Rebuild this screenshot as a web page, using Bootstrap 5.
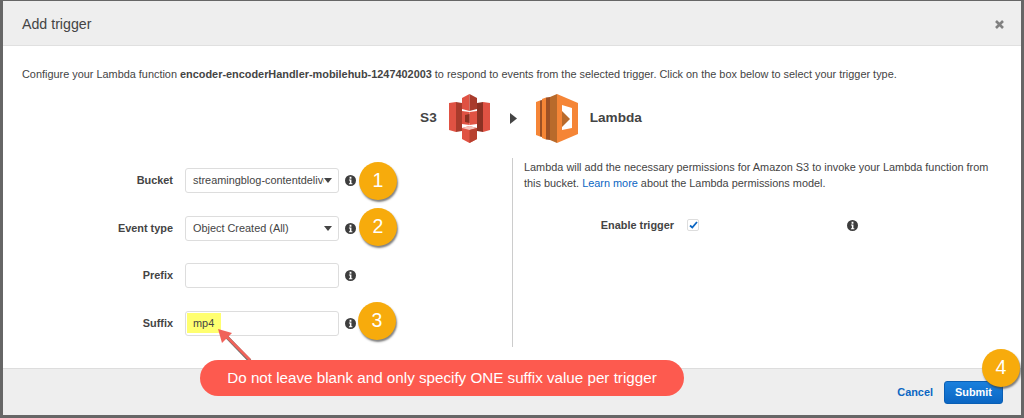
<!DOCTYPE html>
<html lang="en">
<head>
    <meta charset="UTF-8">
    <meta name="viewport" content="width=device-width, initial-scale=1.0">
    <title>Add trigger</title>
    <link href="https://cdn.jsdelivr.net/npm/bootstrap@5.3.0/dist/css/bootstrap.min.css" rel="stylesheet">
    <style>
        html, body { height: 418px; overflow: hidden; }
        body { background: #666; font-family: "Liberation Sans", Arial, sans-serif; font-size: 10.9px; color: #444; padding: 1px 3px 3px; }
        .shot-modal { position: relative; height: 414px; background: #fff; display: flex; flex-direction: column; }
        .shot-head { height: 45px; background: #eee; border-bottom: 1px solid #e0e0e0; padding: 3px 17px 0 19px; }
        .shot-head h5 { font-size: 14.2px; font-weight: 400; color: #444; margin: 0; }
        .shot-body { flex: 1; padding: 21px 19px 0; }
        .shot-intro { margin: 0; line-height: 15px; height: 27px; white-space: nowrap; }
        .shot-flow { height: 49px; padding-left: 38px; }
        .shot-flow b { font-size: 13.6px; color: #444; }
        .shot-cols { height: 189px; margin-top: 15px; }
        .shot-left { width: 490px; padding-top: 10px; }
        .shot-right { flex: 1; border-left: 1px solid #ccc; padding: 2px 0 0 11px; }
        .shot-row { height: 47.5px; display: flex; align-items: flex-start; }
        .shot-label { width: 151px; text-align: right; font-weight: 700; line-height: 25px; }
        .shot-input { width: 154px; height: 25px; margin-left: 12px; border: 1px solid #ddd; border-radius: 3px; background: #fff; padding: 0 6px 0 4px; display: flex; align-items: center; white-space: nowrap; overflow: hidden; }
        .shot-input span { overflow: hidden; padding-left: 3px; }
        .shot-caret { flex: none; width: 0; height: 0; border-left: 4.5px solid transparent; border-right: 4.5px solid transparent; border-top: 5px solid #444; margin-left: auto; }
        .shot-input .shot-hl { background: #ffff70; height: 20px; line-height: 20px; padding: 0 7px 0 6px; margin-left: -3px; }
        .shot-info { flex: none; width: 11px; height: 11px; margin: 7px 0 0 6px; }
        .shot-note { line-height: 15.5px; margin: 0; }
        .shot-note a { color: #0b66c3; text-decoration: none; }
        .shot-enable { margin-top: 26px; height: 16px; }
        .shot-enable b { width: 150px; text-align: right; }
        .shot-enable .shot-info { margin: 0 0 0 148px; }
        .shot-check { width: 12px; height: 12px; margin-left: 13px; border: 1px solid #ddd; border-radius: 2px; background: #fff; }
        .shot-foot { height: 47px; background: #eee; border-top: 1px solid #ddd; padding: 0 18px 0 0; gap: 11px; }
        .shot-cancel { color: #0b66c3; font-weight: 700; text-decoration: none; }
        .shot-submit { width: 59px; height: 23px; padding: 0; font-size: 10.9px; font-weight: 700; color: #fff; border: 1px solid #0a5fb4; border-radius: 3px; background: linear-gradient(#1a80dd, #0b66c3); }
        .shot-num { position: absolute; width: 38px; height: 38px; border-radius: 50%; background: #f7ab0c; color: #fff; font-size: 19.5px; display: flex; align-items: center; justify-content: center; box-shadow: 1px 2px 2px rgba(60, 60, 60, .65); }
        .n1 { left: 356px; top: 161px; }
        .n2 { left: 356px; top: 207px; }
        .n3 { left: 355px; top: 301px; }
        .n4 { left: 979px; top: 348px; }
        .shot-pill { position: absolute; left: 197px; top: 359px; width: 484px; height: 36px; border-radius: 18px; background: #fd5a4f; color: #fff; font-size: 15.2px; display: flex; align-items: center; justify-content: center; }
        .shot-arrow { position: absolute; left: 210px; top: 325px; width: 50px; height: 40px; }
    </style>
</head>
<body>

<div class="shot-modal">
    <div class="shot-head d-flex align-items-center justify-content-between">
        <h5>Add trigger</h5>
        <svg width="9" height="9" viewBox="0 0 9 9"><path d="M1 1 8 8M8 1 1 8" stroke="#808080" stroke-width="2.6" fill="none"/></svg>
    </div>

    <div class="shot-body">
        <p class="shot-intro">Configure your Lambda function <b>encoder-encoderHandler-mobilehub-1247402003</b> to respond to events from the selected trigger. Click on the box below to select your trigger type.</p>

        <div class="shot-flow d-flex align-items-center justify-content-center">
            <b>S3</b>
            <svg style="margin-left: 12px" width="41" height="49" viewBox="0 0 41 49">
                <path d="M0 9 7 8V38L0 36Z" fill="#e05243"/>
                <path d="M7 8 13 9V37L7 38Z" fill="#a93b2c"/>
                <path d="M28 9 34 8V38L28 37Z" fill="#8c3123"/>
                <path d="M34 8 41 9V36L34 38Z" fill="#e05243"/>
                <path d="M20.500 0 13 4V15L20.500 17Z" fill="#e05243"/>
                <path d="M20.500 0 28 4V15L20.500 17Z" fill="#a93b2c"/>
                <path d="M13 17 20.500 18V31L13 30Z" fill="#e05243"/>
                <path d="M28 17 20.500 18V31L28 30Z" fill="#e05243"/>
                <path d="M16 21 20.500 20V29L16 28Z" fill="#8c3123"/>
                <path d="M13 34 20.500 32 28 34V45L20.500 49 13 45Z" fill="#e05243"/>
                <path d="M13 34 20.500 32 28 34 20.500 36Z" fill="#f5c4bd"/>
                <path d="M20.500 36 28 34V45L20.500 49Z" fill="#b8402f"/>
            </svg>
            <svg style="margin-left: 20px" width="7" height="11" viewBox="0 0 7 11"><path d="M0 0 7 5.500 0 11Z" fill="#444"/></svg>
            <svg style="margin-left: 19px" width="42" height="49" viewBox="0 0 42 49">
                <path d="M0 8 4 6.500V42.500L0 41Z" fill="#f58536"/>
                <path d="M4 6.500 6 6V43L4 42.500Z" fill="#9d5025"/>
                <path d="M6 5 10 3.500V45.500L6 44Z" fill="#f58536"/>
                <path d="M10 3.500 14 3V46L10 45.500Z" fill="#9d5025"/>
                <path d="M14 3 21 0V49L14 46Z" fill="#b86a2b"/>
                <path d="M21 0 42 9V40L21 49Z" fill="#f58536"/>
                <path d="M26 11 36 14V34L26 36Z" fill="#fff"/>
                <path d="M26 17 34 25 26 33Z" fill="#b86a2b"/>
            </svg>
            <b style="margin-left: 12px">Lambda</b>
        </div>

        <div class="shot-cols d-flex">
            <div class="shot-left">
                <div class="shot-row">
                    <div class="shot-label">Bucket</div>
                    <div class="shot-input"><span>streamingblog-contentdelivery</span><i class="shot-caret"></i></div>
                    <svg class="shot-info" viewBox="0 0 12 12"><use href="#info"/></svg>
                </div>
                <div class="shot-row">
                    <div class="shot-label">Event type</div>
                    <div class="shot-input"><span>Object Created (All)</span><i class="shot-caret"></i></div>
                    <svg class="shot-info" viewBox="0 0 12 12"><use href="#info"/></svg>
                </div>
                <div class="shot-row">
                    <div class="shot-label">Prefix</div>
                    <div class="shot-input"></div>
                    <svg class="shot-info" viewBox="0 0 12 12"><use href="#info"/></svg>
                </div>
                <div class="shot-row">
                    <div class="shot-label">Suffix</div>
                    <div class="shot-input"><span class="shot-hl">mp4</span></div>
                    <svg class="shot-info" viewBox="0 0 12 12"><use href="#info"/></svg>
                </div>
            </div>
            <div class="shot-right">
                <p class="shot-note">Lambda will add the necessary permissions for Amazon S3 to invoke your Lambda function from this bucket. <a href="#">Learn more</a> about the Lambda permissions model.</p>
                <div class="shot-enable d-flex align-items-center">
                    <b>Enable trigger</b>
                    <span class="shot-check d-flex align-items-center justify-content-center">
                        <svg width="9" height="8" viewBox="0 0 9 8"><path d="M1 4.500 3.300 6.500 8 1" fill="none" stroke="#0b66c3" stroke-width="1.800"/></svg>
                    </span>
                    <svg class="shot-info" viewBox="0 0 12 12"><use href="#info"/></svg>
                </div>
            </div>
        </div>
    </div>

    <div class="shot-foot d-flex align-items-center justify-content-end">
        <a class="shot-cancel" href="#">Cancel</a>
        <button class="btn shot-submit" type="button">Submit</button>
    </div>

    <div class="shot-num n1">1</div>
    <div class="shot-num n2">2</div>
    <div class="shot-num n3">3</div>
    <div class="shot-num n4">4</div>

    <svg class="shot-arrow" viewBox="0 0 50 40">
        <path d="M37 35 11 8" stroke="#6b6b6b" stroke-width="3.400" fill="none"/>
        <path d="M37 34 11 8" stroke="#f0625a" stroke-width="2.600" fill="none"/>
        <path d="M5 3 19 7 9 17Z" fill="#f0625a"/>
    </svg>
    <div class="shot-pill">Do not leave blank and only specify ONE suffix value per trigger</div>
</div>

<svg width="0" height="0" class="position-absolute">
    <symbol id="info" viewBox="0 0 12 12">
        <path fill="#3d3d3d" fill-rule="evenodd" d="M6 0a6 6 0 1 0 0 12A6 6 0 0 0 6 0ZM5 2h2v2H5ZM4.300 5H7V9H8V10H4.300V9H5.300V6H4.300Z"/>
    </symbol>
</svg>

<script src="https://cdn.jsdelivr.net/npm/bootstrap@5.3.0/dist/js/bootstrap.bundle.min.js"></script>
</body>
</html>
